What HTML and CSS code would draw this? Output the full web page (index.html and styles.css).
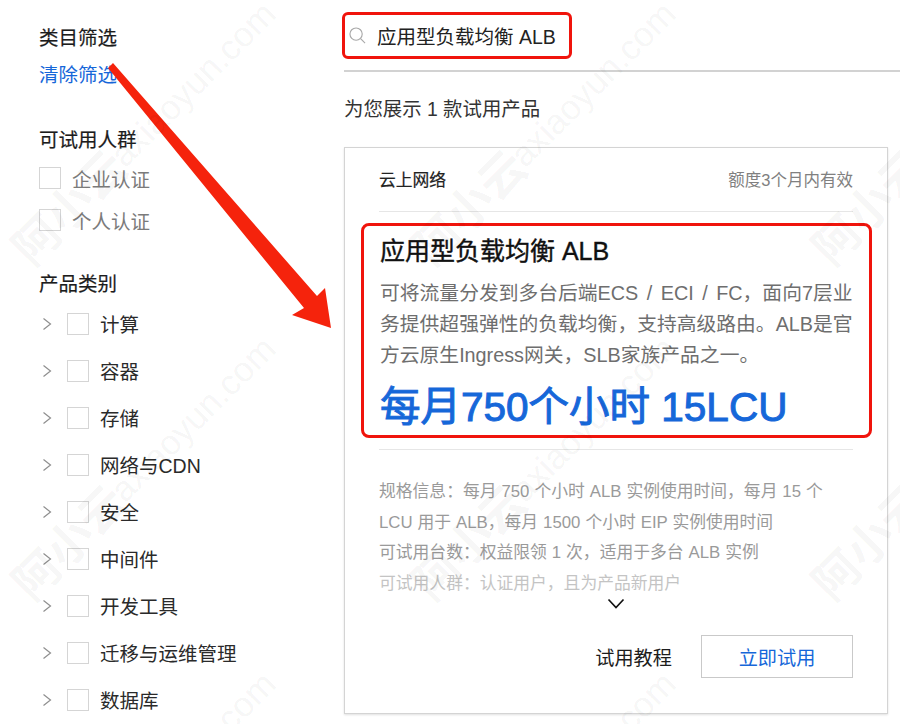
FILE: index.html
```html
<!DOCTYPE html>
<html lang="zh-CN">
<head>
    <meta charset="UTF-8">
    <title>试用产品</title>
    <link rel="stylesheet" href="styles.css">
</head>
<body>
    <div class="page">
        <!-- Filters -->
        <aside class="sidebar">
            <h3 class="filter-title">类目筛选</h3>
            <a class="clear-link">清除筛选</a>

            <h3 class="filter-title group-people">可试用人群</h3>
            <div class="people-row"><span class="checkbox"></span><span>企业认证</span></div>
            <div class="people-row"><span class="checkbox"></span><span>个人认证</span></div>

            <h3 class="filter-title group-category">产品类别</h3>
            <ul class="category-list">
                <li><svg class="arrow-right" viewBox="0 0 10 14"><path d="M1.5 1.5 8.5 7 1.5 12.5"/></svg><span class="checkbox"></span><span>计算</span></li>
                <li><svg class="arrow-right" viewBox="0 0 10 14"><path d="M1.5 1.5 8.5 7 1.5 12.5"/></svg><span class="checkbox"></span><span>容器</span></li>
                <li><svg class="arrow-right" viewBox="0 0 10 14"><path d="M1.5 1.5 8.5 7 1.5 12.5"/></svg><span class="checkbox"></span><span>存储</span></li>
                <li><svg class="arrow-right" viewBox="0 0 10 14"><path d="M1.5 1.5 8.5 7 1.5 12.5"/></svg><span class="checkbox"></span><span>网络与CDN</span></li>
                <li><svg class="arrow-right" viewBox="0 0 10 14"><path d="M1.5 1.5 8.5 7 1.5 12.5"/></svg><span class="checkbox"></span><span>安全</span></li>
                <li><svg class="arrow-right" viewBox="0 0 10 14"><path d="M1.5 1.5 8.5 7 1.5 12.5"/></svg><span class="checkbox"></span><span>中间件</span></li>
                <li><svg class="arrow-right" viewBox="0 0 10 14"><path d="M1.5 1.5 8.5 7 1.5 12.5"/></svg><span class="checkbox"></span><span>开发工具</span></li>
                <li><svg class="arrow-right" viewBox="0 0 10 14"><path d="M1.5 1.5 8.5 7 1.5 12.5"/></svg><span class="checkbox"></span><span>迁移与运维管理</span></li>
                <li><svg class="arrow-right" viewBox="0 0 10 14"><path d="M1.5 1.5 8.5 7 1.5 12.5"/></svg><span class="checkbox"></span><span>数据库</span></li>
            </ul>
        </aside>

        <!-- Results -->
        <main class="main">
            <div class="search-row">
                <div class="search-box">
                    <svg class="search-icon" viewBox="0 0 18 18"><circle cx="7.5" cy="7.5" r="6.5"/><path d="M12.3 12.3 17 17"/></svg>
                    <span>应用型负载均衡 ALB</span>
                </div>
            </div>
            <p class="result-count">为您展示 1 款试用产品</p>

            <div class="card">
                <div class="card-head">
                    <span class="vendor">云上网络</span>
                    <span class="validity">额度3个月内有效</span>
                </div>
                <div class="highlight">
                    <h2 class="product-name">应用型负载均衡 ALB</h2>
                    <p class="product-desc">可将流量分发到多台后端ECS / ECI / FC，面向7层业<br>务提供超强弹性的负载均衡，支持高级路由。ALB是官<br>方云原生Ingress网关，SLB家族产品之一。</p>
                    <div class="promo">每月750个小时 15LCU</div>
                </div>
                <div class="specs">
                    <p>规格信息：每月 750 个小时 ALB 实例使用时间，每月 15 个 LCU 用于 ALB，每月 1500 个小时 EIP 实例使用时间</p>
                    <p>可试用台数：权益限领 1 次，适用于多台 ALB 实例</p>
                    <p class="faded">可试用人群：认证用户，且为产品新用户</p>
                </div>
                <svg class="arrow-down" viewBox="0 0 18 12"><path d="M1.5 1.5 9 9.5 16.5 1.5"/></svg>
                <div class="card-actions">
                    <a class="tutorial">试用教程</a>
                    <button class="try-btn">立即试用</button>
                </div>
            </div>
        </main>
    </div>

    <!-- Red annotation arrow -->
    <svg class="annotation" viewBox="0 0 900 724"><path d="M108 68 113 63 317 296 325 288 331 328 292 315 304 308Z"/></svg>

    <!-- Watermark tiles -->
    <div class="watermarks">
        <div class="tile"><span class="wm-cn">阿小云</span><span class="wm-en">axiaoyun.com</span></div>
        <div class="tile"><span class="wm-cn">阿小云</span><span class="wm-en">axiaoyun.com</span></div>
        <div class="tile"><span class="wm-cn">阿小云</span></div>
        <div class="tile"><span class="wm-cn">阿小云</span><span class="wm-en">axiaoyun.com</span></div>
        <div class="tile"><span class="wm-cn">阿小云</span><span class="wm-en">axiaoyun.com</span></div>
        <div class="tile"><span class="wm-cn">阿小云</span></div>
        <div class="tile"><span class="wm-en">axiaoyun.com</span></div>
        <div class="tile"><span class="wm-en">axiaoyun.com</span></div>
    </div>
</body>
</html>
```

FILE: styles.css
```css
* {
    box-sizing: border-box;
}
html, body {
    margin: 0;
    padding: 0;
    height: 724px;
    overflow: hidden;
    background-color: #fff;
}
body {
    position: relative;
    font-family: "Liberation Sans", "Noto Sans CJK SC", sans-serif;
    color: #222;
}
h2, h3, p, ul {
    margin: 0;
    padding: 0;
}
.page {
    display: flex;
    height: 724px;
}

/* sidebar */
.sidebar {
    width: 344px;
    flex: none;
    padding: 24px 0 0 39px;
    font-size: 19.5px;
}
.filter-title {
    font-size: 19.5px;
    font-weight: 400;
    line-height: 28px;
    color: #1c1c1c;
    -webkit-text-stroke: 0.2px #1c1c1c;
}
.clear-link {
    display: block;
    margin-top: 9px;
    line-height: 28px;
    color: #1667d9;
}
.group-people {
    margin-top: 37px;
}
.group-category {
    margin-top: 29px;
}
.people-row {
    display: flex;
    align-items: center;
    gap: 11px;
    height: 42px;
    color: #7b7b7b;
}
.group-people + .people-row {
    margin-top: 3px;
}
.checkbox {
    width: 22px;
    height: 22px;
    flex: none;
    border: 1px solid #d5d5d5;
    background-color: #fff;
}
.category-list {
    list-style: none;
    margin-top: 2px;
}
.category-list li {
    display: flex;
    align-items: center;
    height: 47px;
    color: #2a2a2a;
}
.category-list .checkbox {
    margin-right: 11px;
}
.arrow-right {
    width: 10px;
    height: 14px;
    margin: 0 15px 0 3px;
    flex: none;
    fill: none;
    stroke: #8e8e8e;
    stroke-width: 1.2;
}

/* main column */
.main {
    width: 556px;
    flex: none;
}
.search-row {
    height: 72px;
    padding-top: 12px;
    border-bottom: 2px solid #d2d2d2;
}
.search-box {
    display: inline-flex;
    align-items: center;
    gap: 11px;
    width: 230px;
    height: 47px;
    margin-left: -2px;
    padding-left: 4px;
    border: 3px solid #f0140c;
    border-radius: 6px;
    font-size: 19.5px;
    white-space: nowrap;
}
.search-icon {
    width: 17px;
    height: 17px;
    flex: none;
    fill: none;
    stroke: #a8a8a8;
    stroke-width: 1.2;
}
.result-count {
    margin-top: 23px;
    font-size: 19.4px;
    line-height: 28px;
    color: #333;
}
.card {
    width: 544px;
    height: 567px;
    margin-top: 24px;
    padding: 0 34px;
    border: 1px solid #d4d4d4;
    box-shadow: 0 1px 2px rgba(0, 0, 0, 0.12);
}
.card-head {
    display: flex;
    justify-content: space-between;
    align-items: center;
    height: 64px;
    padding-bottom: 2px;
    border-bottom: 1px solid #e6e6e6;
}
.vendor {
    font-size: 16.8px;
    color: #222;
    -webkit-text-stroke: 0.2px #222;
}
.validity {
    font-size: 16.5px;
    color: #808080;
}
.highlight {
    height: 215px;
    margin: 11px -19px 0 -18px;
    padding: 9px 16px 0;
    border: 3px solid #f0140c;
    border-radius: 8px;
}
.product-name {
    font-size: 25px;
    font-weight: 400;
    line-height: 32px;
    color: #111;
    -webkit-text-stroke: 0.4px #111;
    white-space: nowrap;
}
.product-desc {
    margin-top: 11px;
    font-size: 19.8px;
    line-height: 31px;
    word-spacing: 3px;
    color: #6e6e6e;
    white-space: nowrap;
}
.promo {
    margin-top: 11px;
    font-size: 40.5px;
    line-height: 50px;
    color: #1667d9;
    -webkit-text-stroke: 1px #1667d9;
    white-space: nowrap;
}
.specs {
    margin-top: 11px;
    padding-top: 27px;
    border-top: 1px solid #e6e6e6;
    font-size: 16.8px;
    word-spacing: 0.3px;
    line-height: 30.5px;
    color: #9a9a9a;
}
.faded {
    color: #c4c4c4;
}
.arrow-down {
    display: block;
    width: 18px;
    height: 12px;
    margin: -1px auto 0;
    fill: none;
    stroke: #111;
    stroke-width: 1.7;
}
.card-actions {
    display: flex;
    justify-content: flex-end;
    align-items: center;
    gap: 29px;
    margin-top: 25px;
}
.tutorial {
    font-size: 19.2px;
    color: #1c1c1c;
}
.try-btn {
    width: 152px;
    height: 43px;
    padding: 0;
    border: 1px solid #c9c9c9;
    background-color: #fff;
    font-family: inherit;
    font-size: 19.2px;
    color: #1667d9;
}

/* overlays */
.annotation {
    position: absolute;
    left: 0;
    top: 0;
    width: 900px;
    height: 724px;
    fill: #f5230c;
}
.watermarks {
    position: absolute;
    left: 0;
    top: 0;
    width: 900px;
    height: 724px;
    overflow: hidden;
    display: grid;
    grid-template-columns: repeat(3, 400px);
    grid-auto-rows: 335px;
    pointer-events: none;
}
.tile {
    position: relative;
    top: -40px;
    left: -10px;
}
.wm-cn, .wm-en {
    position: absolute;
    transform: rotate(-45deg);
    white-space: nowrap;
    color: rgba(0, 0, 0, 0.05);
}
.wm-cn {
    left: 8px;
    top: 212px;
    font-size: 46px;
    font-weight: 700;
}
.wm-en {
    left: 95px;
    top: 104px;
    font-size: 35px;
}
```
